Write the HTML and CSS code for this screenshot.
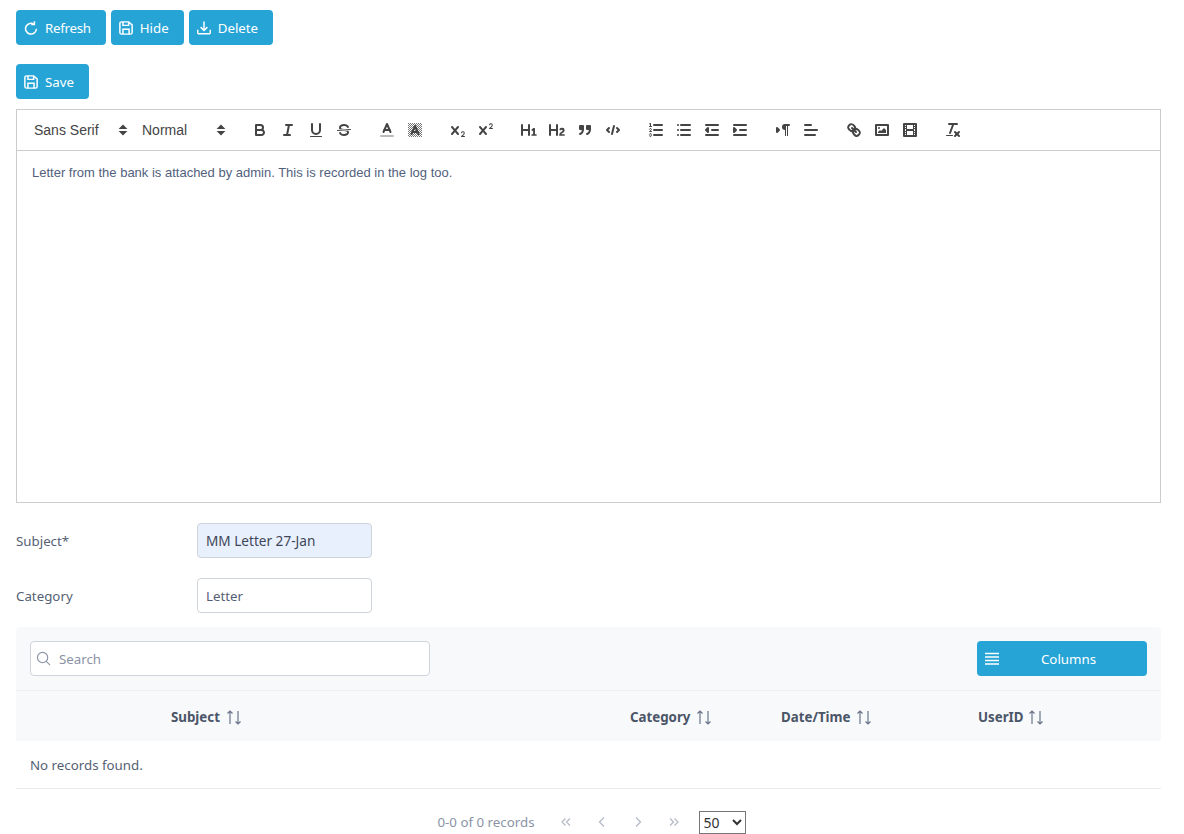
FILE: index.html
```html
<!DOCTYPE html>
<html lang="en">
<head>
<meta charset="utf-8">
<title>Letter</title>
<link rel="stylesheet" href="styles.css">
</head>
<body>
<svg class="defs" width="0" height="0" aria-hidden="true">
  <defs>
    <pattern id="dither" width="2" height="2" patternUnits="userSpaceOnUse">
      <rect width="1" height="1" fill="#777"/>
      <rect x="1" y="1" width="1" height="1" fill="#777"/>
    </pattern>
  </defs>
</svg>
<main class="page">
  <div class="actions">
    <button class="btn" type="button">
      <svg class="btn-icon" viewBox="0 0 16 16"><path d="M14.200 8.800a6.200 6.200 0 1 1-2.500-5"/><path d="M11.900 .4v3.600H8.300"/></svg>
      <span class="tight">Refresh</span>
    </button>
    <button class="btn" type="button">
      <svg class="btn-icon" viewBox="0 0 16 16"><path d="M3 1h8l4 3.500V13a2 2 0 0 1-2 2H3a2 2 0 0 1-2-2V3a2 2 0 0 1 2-2z"/><path d="M4.500 1v4h6.500V1"/><path d="M4.500 15V9.500h7V15"/></svg>
      <span>Hide</span>
    </button>
    <button class="btn" type="button">
      <svg class="btn-icon" viewBox="0 0 16 16"><path d="M8 .5v10"/><path d="M4.200 7l3.800 3.800L11.800 7"/><path d="M.8 10v3.200a1.500 1.500 0 0 0 1.500 1.500h11.400a1.500 1.500 0 0 0 1.500-1.500V10"/></svg>
      <span>Delete</span>
    </button>
  </div>
  <div class="actions save-row">
    <button class="btn" type="button">
      <svg class="btn-icon" viewBox="0 0 16 16"><path d="M3 1h8l4 3.500V13a2 2 0 0 1-2 2H3a2 2 0 0 1-2-2V3a2 2 0 0 1 2-2z"/><path d="M4.500 1v4h6.500V1"/><path d="M4.500 15V9.500h7V15"/></svg>
      <span>Save</span>
    </button>
  </div>

  <section class="editor">
    <div class="toolbar">
      <span class="picker">Sans Serif<svg class="picker-arrow" viewBox="0 0 18 18"><polygon points="7 11 9 13 11 11"/><polygon points="7 7 9 5 11 7"/></svg></span>
      <span class="picker picker-last">Normal<svg class="picker-arrow" viewBox="0 0 18 18"><polygon points="7 11 9 13 11 11"/><polygon points="7 7 9 5 11 7"/></svg></span>
      <span class="group">
        <svg class="ql" viewBox="0 0 18 18"><path class="s" d="M5,4H9.5A2.5,2.5,0,0,1,12,6.5v0A2.5,2.5,0,0,1,9.5,9H5A0,0,0,0,1,5,9V4A0,0,0,0,1,5,4Z"/><path class="s" d="M5,9h5.500A2.500,2.500,0,0,1,13,11.500v0A2.500,2.500,0,0,1,10.500,14H5a0,0,0,0,1,0,0V9A0,0,0,0,1,5,9Z"/></svg>
        <svg class="ql" viewBox="0 0 18 18"><line class="s" x1="7" x2="13" y1="4" y2="4"/><line class="s" x1="5" x2="11" y1="14" y2="14"/><line class="s" x1="8" x2="10" y1="14" y2="4"/></svg>
        <svg class="ql" viewBox="0 0 18 18"><path class="s" d="M5,3V9a4.012,4.012,0,0,0,4,4H9a4.012,4.012,0,0,0,4-4V3"/><rect class="f" height="1" rx=".5" ry=".5" width="12" x="3" y="15"/></svg>
        <svg class="ql" viewBox="0 0 18 18"><line class="s t" x1="15.5" x2="2.5" y1="8.5" y2="9.5"/><path class="f" d="M9.007,8C6.542,7.791,6,7.519,6,6.5,6,5.792,7.283,5,9,5c1.571,0,2.765.679,2.969,1.309a1,1,0,0,0,1.9-.617C13.356,4.106,11.354,3,9,3,6.2,3,4,4.538,4,6.5a3.2,3.2,0,0,0,.5,1.843Z"/><path class="f" d="M8.984,10C11.457,10.208,12,10.479,12,11.5c0,.708-1.283,1.5-3,1.5-1.571,0-2.765-.679-2.969-1.309a1,1,0,1,0-1.9.617C4.644,13.894,6.646,15,9,15c2.8,0,5-1.538,5-3.5a3.2,3.2,0,0,0-.5-1.843Z"/></svg>
      </span>
      <span class="group">
        <svg class="ql" viewBox="0 0 18 18"><line class="s label" x1="3" x2="15" y1="15" y2="15"/><polyline class="s" points="5.5 11 9 3 12.5 11"/><line class="s" x1="11.63" x2="6.38" y1="9" y2="9"/></svg>
        <svg class="ql" viewBox="0 0 18 18"><rect class="dither" x="2" y="2" width="14" height="14"/><polyline class="s" points="5.5 13 9 5 12.5 13"/><line class="s" x1="11.63" x2="6.38" y1="11" y2="11"/></svg>
      </span>
      <span class="group">
        <svg class="ql" viewBox="0 0 18 18"><path class="f" d="M15.5,15H13.861a3.858,3.858,0,0,0,1.914-2.975,1.8,1.8,0,0,0-1.6-1.751A1.921,1.921,0,0,0,12.021,11.7a0.50013,0.50013,0,1,0,.957.291h0a0.914,0.914,0,0,1,1.053-.725,0.81,0.81,0,0,1,.744.762c0,1.076-1.16971,1.86982-1.93971,2.43082A1.45639,1.45639,0,0,0,12,15.5a0.5,0.5,0,0,0,.5.5h3A0.5,0.5,0,0,0,15.5,15Z"/><path class="f" d="M9.65,5.241a1,1,0,0,0-1.409.108L6,7.964,3.759,5.349A1,1,0,0,0,2.192,6.59178Q2.21,6.6,2.241,6.651L4.684,9.5,2.241,12.35A1,1,0,0,0,3.71,13.70722q0.02739-.02.049-0.05278L6,11.036,8.241,13.65a1,1,0,1,0,1.567-1.24277Q9.79,12.4,9.759,12.35L7.316,9.5,9.759,6.651A1,1,0,0,0,9.65,5.241Z"/></svg>
        <svg class="ql" viewBox="0 0 18 18"><path class="f" d="M15.5,7H13.861a4.015,4.015,0,0,0,1.914-2.975,1.8,1.8,0,0,0-1.6-1.751A1.922,1.922,0,0,0,12.021,3.7a0.5,0.5,0,1,0,.957.291,0.917,0.917,0,0,1,1.053-.725,0.81,0.81,0,0,1,.744.762c0,1.077-1.164,1.925-1.934,2.486A1.423,1.423,0,0,0,12,7.5a0.5,0.5,0,0,0,.5.5h3A0.5,0.5,0,0,0,15.5,7Z"/><path class="f" d="M9.651,5.241a1,1,0,0,0-1.41.108L6,7.964,3.759,5.349a1,1,0,1,0-1.519,1.3L4.683,9.5,2.241,12.35a1,1,0,1,0,1.519,1.3L6,11.036,8.241,13.65a1,1,0,0,0,1.519-1.3L7.317,9.5,9.759,6.651A1,1,0,0,0,9.651,5.241Z"/></svg>
      </span>
      <span class="group">
        <svg class="ql" viewBox="0 0 18 18"><path class="f" d="M10,4V14a1,1,0,0,1-2,0V10H3v4a1,1,0,0,1-2,0V4A1,1,0,0,1,3,4V8H8V4a1,1,0,0,1,2,0Zm6.06787,9.209H14.98975V7.59863a.54085.54085,0,0,0-.605-.60547h-.62744a1.01119,1.01119,0,0,0-.748.29688L11.645,8.56641a.5435.5435,0,0,0-.022.8584l.28613.30762a.53861.53861,0,0,0,.84717.0332l.09912-.08789a1.2137,1.2137,0,0,0,.2417-.35254h.02246s-.01123.30859-.01123.60547V13.209H12.041a.54085.54085,0,0,0-.605.60547v.43945a.54085.54085,0,0,0,.605.60547h4.02686a.54085.54085,0,0,0,.605-.60547v-.43945A.54085.54085,0,0,0,16.06787,13.209Z"/></svg>
        <svg class="ql" viewBox="0 0 18 18"><path class="f" d="M16.73975,13.81445v.43945a.54085.54085,0,0,1-.605.60547H11.855a.58392.58392,0,0,1-.64893-.60547V14.0127c0-2.90527,3.39941-3.42187,3.39941-4.55469a.77675.77675,0,0,0-.84717-.78125,1.17684,1.17684,0,0,0-.83594.38477c-.2749.26367-.561.374-.85791.13184l-.4292-.34082c-.30811-.24219-.38525-.51758-.1543-.81445a2.97155,2.97155,0,0,1,2.45361-1.17676,2.45393,2.45393,0,0,1,2.68408,2.40918c0,2.45312-3.1792,2.92676-3.27832,3.93848h2.79443A.54085.54085,0,0,1,16.73975,13.81445ZM9,3A.99974.99974,0,0,0,8,4V8H3V4A1,1,0,0,0,1,4V14a1,1,0,0,0,2,0V10H8v4a1,1,0,0,0,2,0V4A.99974.99974,0,0,0,9,3Z"/></svg>
        <svg class="ql" viewBox="0 0 18 18"><rect class="s f" height="3" width="3" x="4" y="5"/><rect class="s f" height="3" width="3" x="11" y="5"/><path class="s" d="M7,8c0,4.031-3,5-3,5"/><path class="s" d="M14,8c0,4.031-3,5-3,5"/></svg>
        <svg class="ql" viewBox="0 0 18 18"><polyline class="s" points="5 7 3 9 5 11"/><polyline class="s" points="13 7 15 9 13 11"/><line class="s" x1="10" x2="8" y1="5" y2="13"/></svg>
      </span>
      <span class="group">
        <svg class="ql" viewBox="0 0 18 18"><line class="s" x1="7" x2="15" y1="4" y2="4"/><line class="s" x1="7" x2="15" y1="9" y2="9"/><line class="s" x1="7" x2="15" y1="14" y2="14"/><line class="s t" x1="2.5" x2="4.5" y1="5.5" y2="5.5"/><path class="f" d="M3.5,6A0.5,0.5,0,0,1,3,5.5V3.085l-0.276.138A0.5,0.5,0,0,1,2.053,3c-0.124-.247-0.023-0.324.224-0.447l1-.5A0.5,0.5,0,0,1,4,2.5v3A0.5,0.5,0,0,1,3.5,6Z"/><path class="s t" d="M4.5,10.5h-2c0-.234,1.85-1.076,1.85-2.234A0.959,0.959,0,0,0,2.5,8.156"/><path class="s t" d="M2.5,14.846a0.959,0.959,0,0,0,1.85-.109A0.7,0.7,0,0,0,3.75,14a0.688,0.688,0,0,0,.6-0.736,0.959,0.959,0,0,0-1.85-.109"/></svg>
        <svg class="ql" viewBox="0 0 18 18"><line class="s" x1="6" x2="15" y1="4" y2="4"/><line class="s" x1="6" x2="15" y1="9" y2="9"/><line class="s" x1="6" x2="15" y1="14" y2="14"/><line class="s" x1="3" x2="3" y1="4" y2="4"/><line class="s" x1="3" x2="3" y1="9" y2="9"/><line class="s" x1="3" x2="3" y1="14" y2="14"/></svg>
        <svg class="ql" viewBox="0 0 18 18"><line class="s" x1="3" x2="15" y1="14" y2="14"/><line class="s" x1="3" x2="15" y1="4" y2="4"/><line class="s" x1="9" x2="15" y1="9" y2="9"/><polyline class="s f" points="5 7 5 11 3 9 5 7"/></svg>
        <svg class="ql" viewBox="0 0 18 18"><line class="s" x1="3" x2="15" y1="14" y2="14"/><line class="s" x1="3" x2="15" y1="4" y2="4"/><line class="s" x1="9" x2="15" y1="9" y2="9"/><polyline class="s f" points="3 7 3 11 5 9 3 7"/></svg>
      </span>
      <span class="group">
        <svg class="ql" viewBox="0 0 18 18"><polygon class="s f" points="3 11 5 9 3 7 3 11"/><line class="s" x1="15" x2="11" y1="4" y2="4"/><path class="f" d="M11,3a3,3,0,0,0,0,6h1V3H11Z"/><rect class="f" height="11" width="1" x="11" y="4"/><rect class="f" height="11" width="1" x="13" y="4"/></svg>
        <svg class="ql" viewBox="0 0 18 18"><line class="s" x1="3" x2="15" y1="9" y2="9"/><line class="s" x1="3" x2="13" y1="14" y2="14"/><line class="s" x1="3" x2="9" y1="4" y2="4"/></svg>
      </span>
      <span class="group">
        <svg class="ql" viewBox="0 0 18 18"><line class="s" x1="7" x2="11" y1="7" y2="11"/><path class="s" d="M8.9,4.577a3.476,3.476,0,0,1,.36,4.679A3.476,3.476,0,0,1,4.577,8.9C3.185,7.5,2.035,6.4,4.217,4.217S7.5,3.185,8.9,4.577Z"/><path class="s" d="M13.423,9.1a3.476,3.476,0,0,0-4.679-.36,3.476,3.476,0,0,0,.36,4.679c1.392,1.392,2.5,2.542,4.679.36S14.815,10.5,13.423,9.1Z"/></svg>
        <svg class="ql" viewBox="0 0 18 18"><rect class="s" height="10" width="12" x="3" y="4"/><circle class="f" cx="6" cy="7" r="1"/><polyline class="f" points="5 12 5 11 7 9 8 10 11 7 13 9 13 12 5 12"/></svg>
        <svg class="ql" viewBox="0 0 18 18"><rect class="s" height="12" width="12" x="3" y="3"/><rect class="f" height="12" width="1" x="5" y="3"/><rect class="f" height="12" width="1" x="12" y="3"/><rect class="f" height="2" width="8" x="5" y="8"/><rect class="f" height="1" width="3" x="3" y="5"/><rect class="f" height="1" width="3" x="3" y="7"/><rect class="f" height="1" width="3" x="3" y="10"/><rect class="f" height="1" width="3" x="3" y="12"/><rect class="f" height="1" width="3" x="12" y="5"/><rect class="f" height="1" width="3" x="12" y="7"/><rect class="f" height="1" width="3" x="12" y="10"/><rect class="f" height="1" width="3" x="12" y="12"/></svg>
      </span>
      <span class="group">
        <svg class="ql" viewBox="0 0 18 18"><line class="s" x1="5" x2="13" y1="3" y2="3"/><line class="s" x1="6" x2="9.35" y1="12" y2="3"/><line class="s" x1="11" x2="15" y1="11" y2="15"/><line class="s" x1="15" x2="11" y1="11" y2="15"/><rect class="f" height="1" rx=".5" ry=".5" width="7" x="2" y="14"/></svg>
      </span>
    </div>
    <div class="editor-body">
      <p>Letter from the bank is attached by admin. This is recorded in the log too.</p>
    </div>
  </section>

  <div class="form">
    <div class="form-row">
      <label class="form-label" for="subject">Subject*</label>
      <input class="input input-filled" id="subject" type="text" value="MM Letter 27-Jan">
    </div>
    <div class="form-row">
      <label class="form-label" for="category">Category</label>
      <input class="input" id="category" type="text" value="Letter">
    </div>
  </div>

  <section class="datatable">
    <div class="dt-top">
      <div class="search">
        <svg class="search-icon" viewBox="0 0 16 16"><circle cx="7" cy="7" r="5.500"/><path d="M11 11l4 4"/></svg>
        <input class="search-input" type="text" placeholder="Search">
      </div>
      <button class="btn btn-columns" type="button">
        <svg class="bars-icon" viewBox="0 0 16 14"><path d="M1 1.500h14M1 5h14M1 8.500h14M1 12h14"/></svg>
        <span class="btn-columns-label">Columns</span>
      </button>
    </div>
    <div class="dt-head">
      <div class="th th-subject">Subject<svg class="sort" viewBox="0 0 16 16"><path d="M4 15V2M1.500 4.500L4 2l2.500 2.500"/><path d="M12 2v13M9.500 12.500L12 15l2.500-2.500"/></svg></div>
      <div class="th">Category<svg class="sort" viewBox="0 0 16 16"><path d="M4 15V2M1.500 4.500L4 2l2.500 2.500"/><path d="M12 2v13M9.500 12.500L12 15l2.500-2.500"/></svg></div>
      <div class="th">Date/Time<svg class="sort" viewBox="0 0 16 16"><path d="M4 15V2M1.500 4.500L4 2l2.500 2.500"/><path d="M12 2v13M9.500 12.500L12 15l2.500-2.500"/></svg></div>
      <div class="th th-user">UserID<svg class="sort" viewBox="0 0 16 16"><path d="M4 15V2M1.500 4.500L4 2l2.500 2.500"/><path d="M12 2v13M9.500 12.500L12 15l2.500-2.500"/></svg></div>
    </div>
    <div class="dt-empty">No records found.</div>
    <div class="paginator">
      <span class="page-report">0-0 of 0 records</span>
      <span class="page-btn"><svg viewBox="0 0 12 12"><path d="M5.500 2.500L2 6l3.500 3.500M10 2.500L6.500 6l3.500 3.500"/></svg></span>
      <span class="page-btn"><svg viewBox="0 0 12 12"><path d="M8 1.500L3.500 6 8 10.500"/></svg></span>
      <span class="page-btn"><svg viewBox="0 0 12 12"><path d="M4 1.500L8.500 6 4 10.500"/></svg></span>
      <span class="page-btn"><svg viewBox="0 0 12 12"><path d="M2 2.500L5.500 6 2 9.500M6.500 2.500L10 6l-3.500 3.500"/></svg></span>
      <select class="page-size"><option>50</option></select>
    </div>
  </section>
</main>
</body>
</html>
```

FILE: styles.css
```css
* { box-sizing: border-box; }

html, body {
  margin: 0;
  height: 100%;
  overflow: hidden;
  background: #fff;
}

body {
  font-family: "Noto Sans", "Open Sans", sans-serif;
  font-size: 13.300px;
  color: #555f74;
}

.defs { position: absolute; }

.page {
  padding: 10px 23px 0 16px;
}

.actions {
  display: flex;
  gap: 5px;
}

.save-row {
  margin-top: 19px;
  margin-bottom: 10px;
}

.btn {
  display: inline-flex;
  align-items: center;
  height: 35px;
  padding: 0 15px 0 8px;
  gap: 7px;
  border: 0;
  border-radius: 4px;
  background: #26a4d6;
  color: #fff;
  font: inherit;
}

.tight { letter-spacing: -.28px; }

.btn-icon {
  width: 14px;
  height: 14px;
  fill: none;
  stroke: #fff;
  stroke-width: 1.700;
}

/* editor */
.editor {
  border: 1px solid #ccc;
  height: 394px;
  display: flex;
  flex-direction: column;
}

.toolbar {
  display: flex;
  align-items: center;
  height: 41px;
  flex: none;
  padding: 0 8px;
  border-bottom: 1px solid #ccc;
  font-family: "Liberation Sans", Arial, sans-serif;
  font-size: 14px;
  color: #444;
}

.picker {
  position: relative;
  display: flex;
  align-items: center;
  width: 108px;
  height: 24px;
  padding-left: 9px;
}

.picker-last {
  width: 98px;
  margin-right: 15px;
}

.picker-arrow {
  position: absolute;
  right: 1px;
  top: 3px;
  width: 18px;
  height: 18px;
  fill: #444;
  stroke: #444;
  stroke-width: 2;
}

.group {
  display: flex;
  margin-right: 15px;
}

.ql {
  width: 28px;
  height: 24px;
  padding: 3px 5px;
  flex: none;
}

.s {
  fill: none;
  stroke: #444;
  stroke-width: 2;
  stroke-linecap: round;
  stroke-linejoin: round;
}

.t { stroke-width: 1; }

.f { fill: #444; }
.s.f { fill: #444; }

.label { stroke: #bbb; }

.dither { fill: url(#dither); }

.editor-body {
  flex: 1;
  padding: 12px 15px;
  font-family: "Liberation Sans", Arial, sans-serif;
  font-size: 13px;
  line-height: 19px;
  color: #525f7d;
}

.editor-body p { margin: 0; }

/* form */
.form {
  padding-top: 20px;
  display: flex;
  flex-direction: column;
  gap: 20px;
}

.form-row {
  display: flex;
  align-items: center;
}

.form-label {
  width: 181px;
}

.input {
  width: 175px;
  height: 35px;
  padding: 0 8px;
  border: 1px solid #ced4da;
  border-radius: 4px;
  background: #fff;
  color: inherit;
  font: inherit;
  outline: 0;
}

.input-filled {
  background: #e8f0fe;
  color: #3f4657;
  font-size: 13.600px;
}

/* table */
.datatable {
  margin-top: 14px;
}

.dt-top {
  display: flex;
  align-items: center;
  justify-content: space-between;
  height: 64px;
  padding: 0 14px;
  background: #f8f9fa;
  border-radius: 4px 4px 0 0;
  border-bottom: 1px solid #edeff1;
}

.search {
  position: relative;
  width: 400px;
}

.search-icon {
  position: absolute;
  left: 6px;
  top: 10px;
  width: 15px;
  height: 15px;
  fill: none;
  stroke: #8a93a6;
  stroke-width: 1.200;
}

.search-input {
  display: block;
  width: 100%;
  height: 35px;
  padding: 0 8px 0 28px;
  border: 1px solid #ced4da;
  border-radius: 4px;
  font: inherit;
  color: inherit;
  outline: 0;
}

.search-input::placeholder {
  color: #8a93a6;
}

.btn-columns {
  width: 170px;
  padding: 0 0 0 7px;
  gap: 0;
}

.bars-icon {
  width: 16px;
  height: 14px;
  fill: none;
  stroke: #fff;
  stroke-width: 1.400;
}

.btn-columns-label {
  flex: 1;
  text-align: center;
  padding-right: 10px;
}

.dt-head {
  display: grid;
  grid-template-columns: 600px 151px 197px 197px;
  align-items: center;
  height: 50px;
  padding-top: 1px;
  background: #f8f9fa;
  font-weight: 700;
  color: #4b5568;
}

.th {
  display: flex;
  align-items: center;
  gap: 6px;
  padding-left: 14px;
}

.th-subject { padding-left: 155px; }

.th-user { gap: 4px; }

.sort {
  width: 16px;
  height: 16px;
  fill: none;
  stroke: #6a758b;
  stroke-width: 1.200;
}

.dt-empty {
  display: flex;
  align-items: center;
  height: 48px;
  padding-left: 14px;
  border-bottom: 1px solid #e9ecef;
}

.paginator {
  display: flex;
  align-items: center;
  justify-content: center;
  height: 45px;
  padding-top: 21px;
  padding-left: 6px;
  color: #8a93a6;
}

.page-report {
  margin-right: 13px;
}

.page-btn {
  display: flex;
  justify-content: center;
  width: 36px;
}

.page-btn svg {
  width: 12px;
  height: 12px;
  fill: none;
  stroke: #b4bac6;
  stroke-width: 1.300;
}

.page-size {
  margin-left: 7px;
  width: 47px;
  height: 23px;
  background: #fff;
  color: #333;
  font-family: inherit;
  font-size: 14px;
}
```
